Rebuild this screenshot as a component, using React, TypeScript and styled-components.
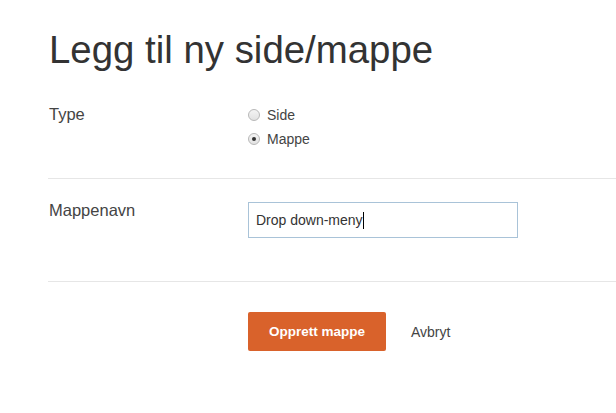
import React from "react";
import styled, { createGlobalStyle } from "styled-components";

const Global = createGlobalStyle`
  html, body { margin: 0; padding: 0; background: #fff; }
  body { font-family: "Liberation Sans", Arial, sans-serif; color: #333; }
`;

const Page = styled.div`
  padding: 28px 0 0 48px;
`;

const Title = styled.h1`
  margin: 0 0 34px 1px;
  font-size: 38.4px;
  font-weight: 400;
  line-height: 44px;
  color: #333;
`;

const Row = styled.div<{ $pad: string }>`
  display: grid;
  grid-template-columns: 200px 1fr;
  padding: ${(p) => p.$pad};
`;

const Label = styled.div`
  font-size: 16.5px;
  line-height: 16px;
  color: #444;
  padding-left: 1px;
`;

const Radios = styled.div`
  display: flex;
  flex-direction: column;
  gap: 6px;
`;

const RadioLine = styled.label`
  display: flex;
  align-items: center;
  gap: 7px;
  font-size: 14px;
  line-height: 18px;
  color: #444;
`;

const RadioDot = styled.span<{ $checked?: boolean }>`
  width: 10px;
  height: 10px;
  border-radius: 50%;
  border: 1px solid #b8b8b8;
  background: linear-gradient(#f4f4f4, #e2e2e2);
  display: flex;
  align-items: center;
  justify-content: center;
  &::after {
    content: "";
    display: ${(p) => (p.$checked ? "block" : "none")};
    width: 4px;
    height: 4px;
    border-radius: 50%;
    background: #333;
  }
`;

const Divider = styled.div`
  height: 1px;
  background: #e6e6e6;
`;

const Input = styled.div`
  box-sizing: border-box;
  width: 270px;
  height: 36px;
  border: 1px solid #a9c3d8;
  padding: 0 7px;
  display: flex;
  align-items: center;
  font-size: 14px;
  color: #333;
`;

const Caret = styled.span`
  display: inline-block;
  width: 1px;
  height: 17px;
  background: #000;
`;

const Actions = styled.div`
  display: flex;
  align-items: center;
`;

const Primary = styled.button`
  box-sizing: border-box;
  width: 138px;
  height: 39px;
  border: none;
  border-radius: 2px;
  background: #d9622b;
  color: #fff;
  font-family: "Liberation Sans", Arial, sans-serif;
  font-size: 13.5px;
  font-weight: 700;
  padding: 0;
`;

const LinkButton = styled.span`
  margin-left: 25px;
  font-size: 14px;
  color: #444;
`;

export default function App() {
  return (
    <>
      <Global />
      <Page>
        <Title>Legg til ny side/mappe</Title>
        <Row $pad="0 0 30px 0">
          <Label>Type</Label>
          <Radios>
            <RadioLine>
              <RadioDot />
              Side
            </RadioLine>
            <RadioLine>
              <RadioDot $checked />
              Mappe
            </RadioLine>
          </Radios>
        </Row>
        <Divider />
        <Row $pad="23px 0 43px 0">
          <Label>Mappenavn</Label>
          <Input>
            Drop down-meny
            <Caret />
          </Input>
        </Row>
        <Divider />
        <Row $pad="30px 0 0 0">
          <div />
          <Actions>
            <Primary>Opprett mappe</Primary>
            <LinkButton>Avbryt</LinkButton>
          </Actions>
        </Row>
      </Page>
    </>
  );
}
